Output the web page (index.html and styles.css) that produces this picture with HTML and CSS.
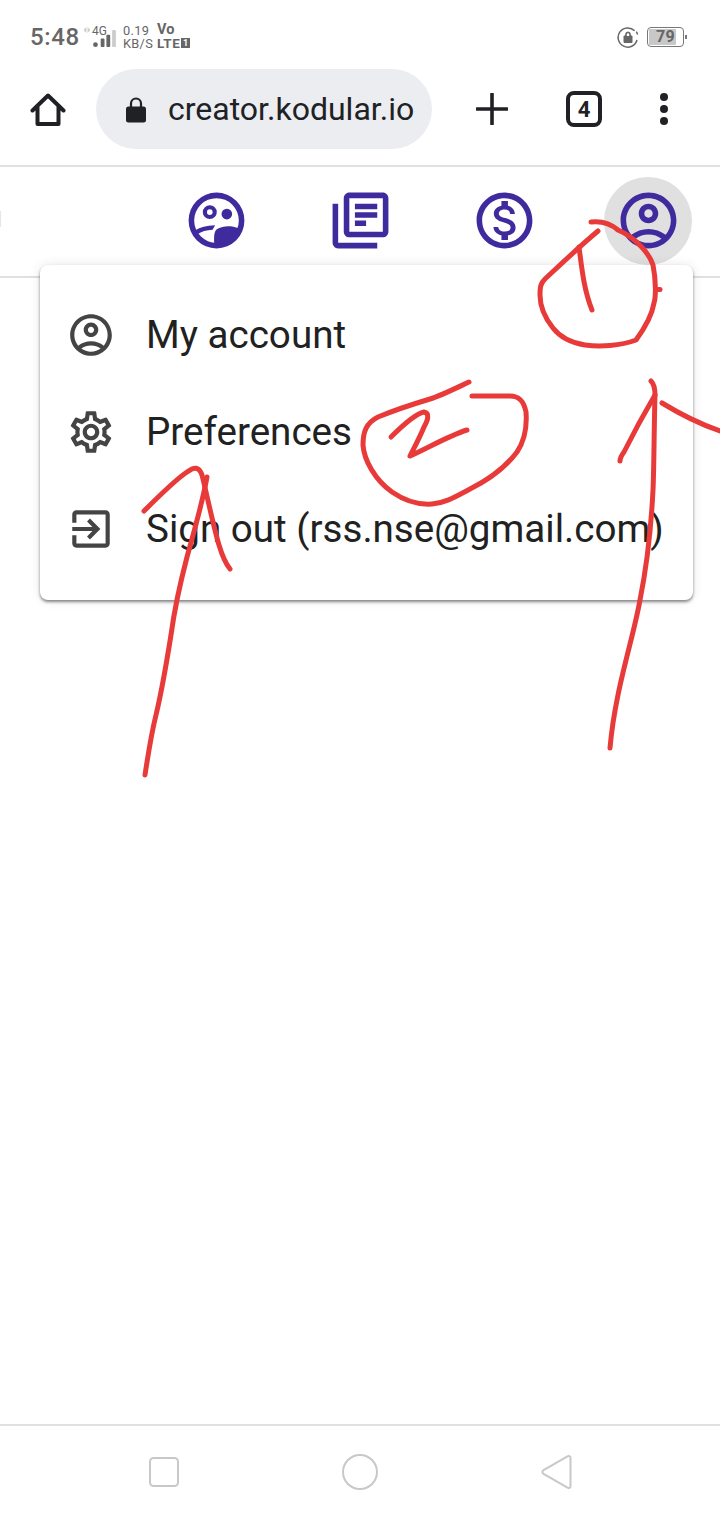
FILE: index.html
```html
<!DOCTYPE html>
<html lang="en">
<head>
<meta charset="utf-8">
<title>creator.kodular.io</title>
<link rel="stylesheet" href="styles.css">
</head>
<body>
<div class="phone">
  <header class="status">
    <div class="status-left">
      <span class="clock">5:48</span>
      <svg class="sig-arrows" viewBox="0 0 8 8"><path d="M3.4 1L.6 4l2.8 3zM4.6 1l2.8 3-2.8 3z"/></svg>
      <div class="signal">
        <span class="tag-4g">4G</span>
        <svg class="bars" viewBox="0 0 24 20"><circle cx="2.5" cy="16.5" r="2.5" fill="#666"/><rect x="8" y="10" width="4" height="9" rx="1" fill="#666"/><rect x="14" y="6" width="4" height="13" rx="1" fill="#666"/><rect x="20" y="1" width="4" height="18" rx="1" fill="#ccc"/></svg>
      </div>
      <div class="speed"><span>0.19</span><span>KB/S</span></div>
      <div class="volte"><span class="vo">Vo</span><span class="lte">LTE<i class="sim">1</i></span></div>
    </div>
    <div class="status-right">
      <svg class="rot" viewBox="0 0 22 22"><path d="M17.6 4.8A9.6 9.6 0 1 0 20 14" fill="none" stroke="#666" stroke-width="1.5"/><path d="M20.6 8.5a10 10 0 0 0-1.3-2.8" fill="none" stroke="#666" stroke-width="1.5"/><path d="M7 10h8v6.5H7zM8.6 10V8.4a2.4 2.4 0 0 1 4.8 0V10" fill="#666" stroke="#666" stroke-width="1"/><path d="M9.8 10V8.4a1.2 1.2 0 0 1 2.4 0V10z" fill="#fff"/></svg>
      <div class="battery"><span class="level"></span><span class="pct">79</span></div>
      <span class="nub"></span>
    </div>
  </header>

  <nav class="toolbar">
    <svg class="home" viewBox="0 0 36 36"><path d="M2.5 18.5L18 3.5l15.500 15M7.500 15v17h21V15" fill="none" stroke="#202124" stroke-width="4" stroke-linejoin="round" stroke-linecap="round"/></svg>
    <div class="omnibox">
      <svg class="lock" viewBox="0 0 20 26"><path d="M2.500 9.500h15a2.500 2.500 0 0 1 2.500 2.500v11a2.500 2.500 0 0 1-2.500 2.500h-15a2.500 2.500 0 0 1-2.500-2.500V12a2.500 2.500 0 0 1 2.500-2.500z" fill="#202124"/><path d="M5 11V6.500a5 5 0 0 1 10 0V11" fill="none" stroke="#202124" stroke-width="2.200"/></svg>
      <span class="url">creator.kodular.io</span>
    </div>
    <svg class="plus" viewBox="0 0 32 32"><path d="M16 1v30M1 16h30" stroke="#202124" stroke-width="3.600" stroke-linecap="round"/></svg>
    <div class="tabs">4</div>
    <div class="dots"><span></span><span></span><span></span></div>
  </nav>

  <section class="appbar">
    <span class="edge"></span>
    <svg class="app-icon" viewBox="0 0 24 24"><path fill-rule="evenodd" d="M12 2a10 10 0 1 0 0 20 10 10 0 0 0 0-20zm0 2a8 8 0 1 1 0 16 8 8 0 0 1 0-16z"/><path fill-rule="evenodd" d="M9.600 6.500a2.500 2.500 0 1 0 0 5 2.500 2.500 0 0 0 0-5zm0 1.500a1 1 0 1 1 0 2 1 1 0 0 1 0-2z"/><circle cx="15.700" cy="9.700" r="1.900"/><path d="M4.500 15.500C6 14.500 8.500 13.800 11.500 13.700L10.600 15.300C8.500 15.400 6.500 15.900 5.200 16.900z"/><path d="M11.200 20.500C11 17.200 11.200 15.500 12.600 14.900C14 14 17 13.600 20 14.800L19.500 16C18 19 15 20.700 11.200 20.500z"/></svg>
    <svg class="app-icon" viewBox="0 0 24 24"><path d="M4 6H2v14c0 1.100.9 2 2 2h14v-2H4V6zm16-4H8c-1.100 0-2 .9-2 2v12c0 1.100.9 2 2 2h12c1.100 0 2-.9 2-2V4c0-1.100-.9-2-2-2zm0 14H8V4h12v12zM10 9h8v2h-8zm0 3h4v2h-4zm0-6h8v2h-8z"/></svg>
    <svg class="app-icon" viewBox="0 0 24 24"><path d="M12 2C6.480 2 2 6.480 2 12s4.480 10 10 10 10-4.480 10-10S17.520 2 12 2zm0 18c-4.410 0-8-3.590-8-8s3.590-8 8-8 8 3.590 8 8-3.590 8-8 8zm.31-8.860c-1.770-.45-2.340-.94-2.340-1.670 0-.84.79-1.430 2.100-1.430 1.380 0 1.900.66 1.940 1.640h1.710c-.05-1.340-.87-2.570-2.490-2.970V5H10.900v1.690c-1.510.32-2.720 1.300-2.720 2.810 0 1.790 1.490 2.690 3.660 3.210 1.950.46 2.340 1.150 2.340 1.870 0 .53-.39 1.390-2.100 1.390-1.600 0-2.230-.72-2.320-1.640H8.040c.1 1.700 1.360 2.660 2.860 2.970V19h2.340v-1.670c1.520-.29 2.720-1.160 2.730-2.770-.01-2.200-1.900-2.960-3.660-3.420z"/></svg>
    <div class="account-btn">
      <svg class="app-icon" viewBox="0 0 24 24"><path d="M12 2C6.480 2 2 6.480 2 12s4.480 10 10 10 10-4.480 10-10S17.520 2 12 2zM7.350 18.500C8.660 17.560 10.260 17 12 17s3.340.56 4.650 1.500C15.340 19.440 13.740 20 12 20s-3.340-.56-4.650-1.500zm10.790-1.380C16.450 15.800 14.320 15 12 15s-4.450.8-6.140 2.120C4.700 15.730 4 13.950 4 12c0-4.420 3.580-8 8-8s8 3.580 8 8c0 1.950-.7 3.730-1.860 5.120zM12 6c-1.930 0-3.500 1.570-3.500 3.500S10.070 13 12 13s3.500-1.570 3.500-3.500S13.930 6 12 6zm0 5c-.83 0-1.500-.67-1.500-1.500S11.170 8 12 8s1.500.67 1.500 1.500S12.830 11 12 11z"/></svg>
    </div>
  </section>

  <main class="content"></main>

  <footer class="navbar">
    <svg class="nav-square" viewBox="0 0 30 30"><rect x="1" y="1" width="28" height="28" rx="3.500"/></svg>
    <svg class="nav-circle" viewBox="0 0 36 36"><circle cx="18" cy="18" r="17"/></svg>
    <svg class="nav-back" viewBox="0 0 32 36"><path d="M2.500 16.200L26.500 2.300c1.500-.8 3-.1 3 1.700v28c0 1.800-1.500 2.500-3 1.700L2.500 19.800c-1.500-.9-1.500-2.700 0-3.600z"/></svg>
  </footer>

  <div class="menu">
    <div class="menu-item">
      <svg class="menu-icon" viewBox="0 0 24 24"><path d="M12 2C6.480 2 2 6.480 2 12s4.480 10 10 10 10-4.480 10-10S17.520 2 12 2zM7.350 18.500C8.660 17.560 10.260 17 12 17s3.340.56 4.650 1.500C15.340 19.440 13.740 20 12 20s-3.340-.56-4.650-1.500zm10.790-1.380C16.450 15.800 14.320 15 12 15s-4.450.8-6.140 2.120C4.700 15.730 4 13.950 4 12c0-4.420 3.580-8 8-8s8 3.580 8 8c0 1.950-.7 3.730-1.860 5.120zM12 6c-1.930 0-3.500 1.570-3.500 3.500S10.070 13 12 13s3.500-1.570 3.500-3.500S13.930 6 12 6zm0 5c-.83 0-1.500-.67-1.500-1.500S11.170 8 12 8s1.500.67 1.500 1.500S12.830 11 12 11z"/></svg>
      <span>My account</span>
    </div>
    <div class="menu-item">
      <svg class="menu-icon" viewBox="0 0 24 24"><path d="M19.430 12.980c.04-.32.07-.64.07-.98 0-.34-.03-.66-.07-.98l2.110-1.650c.19-.15.24-.42.12-.64l-2-3.460c-.09-.16-.26-.25-.44-.25-.06 0-.12.01-.17.03l-2.490 1c-.52-.4-1.080-.73-1.690-.98l-.38-2.650C14.460 2.180 14.250 2 14 2h-4c-.25 0-.46.18-.49.42l-.38 2.650c-.61.25-1.170.59-1.690.98l-2.490-1c-.06-.02-.12-.03-.18-.03-.17 0-.34.09-.43.25l-2 3.460c-.13.22-.07.49.12.64l2.110 1.650c-.04.32-.07.65-.07.98 0 .33.03.66.07.98l-2.110 1.650c-.19.15-.24.42-.12.64l2 3.460c.09.16.26.25.44.25.06 0 .12-.01.17-.03l2.490-1c.52.4 1.080.73 1.690.98l.38 2.650c.03.24.24.42.49.42h4c.25 0 .46-.18.49-.42l.38-2.650c.61-.25 1.170-.59 1.690-.98l2.490 1c.06.02.12.03.18.03.17 0 .34-.09.43-.25l2-3.460c.12-.22.07-.49-.12-.64l-2.110-1.650zm-1.980-1.710c.04.31.05.52.05.73 0 .21-.02.43-.05.73l-.14 1.130.89.7 1.080.84-.7 1.210-1.270-.51-1.040-.42-.9.68c-.43.32-.84.56-1.250.73l-1.060.43-.16 1.130-.2 1.350h-1.400l-.19-1.350-.16-1.130-1.060-.43c-.43-.18-.83-.41-1.230-.71l-.91-.7-1.060.43-1.270.51-.7-1.210 1.080-.84.89-.7-.14-1.130c-.03-.31-.05-.54-.05-.74s.02-.43.05-.73l.14-1.130-.89-.7-1.080-.84.7-1.210 1.270.51 1.040.42.9-.68c.43-.32.84-.56 1.250-.73l1.060-.43.16-1.130.2-1.350h1.390l.19 1.350.16 1.130 1.060.43c.43.18.83.41 1.230.71l.91.7 1.060-.43 1.270-.51.7 1.210-1.070.85-.89.7.14 1.130zM12 8c-2.210 0-4 1.790-4 4s1.790 4 4 4 4-1.790 4-4-1.790-4-4-4zm0 6c-1.100 0-2-.9-2-2s.9-2 2-2 2 .9 2 2-.9 2-2 2z"/></svg>
      <span>Preferences</span>
    </div>
    <div class="menu-item">
      <svg class="menu-icon" viewBox="0 0 24 24"><path d="M10.090 15.590L11.500 17l5-5-5-5-1.410 1.410L12.670 11H3v2h9.670l-2.580 2.590zM19 3H5c-1.110 0-2 .9-2 2v4h2V5h14v14H5v-4H3v4c0 1.100.89 2 2 2h14c1.100 0 2-.9 2-2V5c0-1.100-.9-2-2-2z"/></svg>
      <span>Sign out (rss.nse@gmail.com)</span>
    </div>
  </div>

  <svg class="scribble" viewBox="0 0 720 1520">
    <path d="M591 222C600 221 610 223 618 230C632 236 648 250 653 265C656 280 656 297 654 303C652 315 647 325 636 340C620 346 600 347 585 345C572 343 560 337 553 328C545 318 540 307 540 295C540 286 541 283 545 279C560 265 580 246 598 231"/>
    <path d="M579 247C582 270 584 290 592 310"/>
    <path d="M658 289.500L660 289.500"/>
    <path d="M469 382C450 391 440 396 430 399C410 405 395 410 378 417C366 423 363 432 363 445C364 460 375 480 392 492C405 501 418 505 432 504C445 503 455 497 470 489C490 479 505 468 517 452C525 440 527 425 526 412C524 402 520 396 510 396L472 396"/>
    <path d="M391 437C400 428 415 414 424 412C430 413 428 420 424 427C420 437 414 448 410 456C428 448 448 436 467 430"/>
    <path d="M651 381C654 384 655 388 655 395C654 430 654 470 653 490C651 530 648 560 640 600C633 640 615 690 610 748"/>
    <path d="M655 395C645 412 632 436 624 452C621 456 620 458 620 461"/>
    <path d="M662 403C680 414 700 424 720 431"/>
    <path d="M145 775C148 755 151 735 156 715C162 690 167 660 171 635C175 605 181 580 187 557C193 535 202 505 207 477"/>
    <path d="M144 511C160 495 175 480 187 472C195 466 199 467 202 475C207 495 213 525 219 545C222 555 226 564 230 569"/>
  </svg>
</div>
</body>
</html>
```

FILE: styles.css
```css
* { box-sizing: border-box; }
html, body { margin: 0; padding: 0; background: #fff; }
body { font-family: Roboto, "Noto Sans", sans-serif; }

.phone {
  position: relative;
  width: 720px;
  height: 1520px;
  overflow: hidden;
  display: flex;
  flex-direction: column;
  background: #fff;
}

/* status bar */
.status {
  height: 61px;
  flex: none;
  display: flex;
  align-items: center;
  justify-content: space-between;
  padding: 13px 33px 0 30px;
  color: #666;
}
.status-left, .status-right { display: flex; align-items: center; }
.clock { font-size: 24px; font-weight: 500; letter-spacing: .6px; width: 53px; }
.sig-arrows { width: 8px; height: 8px; fill: #ccc; margin: -14px 0 0 0; }
.signal { position: relative; width: 26px; height: 24px; }
.tag-4g { position: absolute; left: 1px; top: -1px; font-size: 12px; line-height: 14px; }
.bars { position: absolute; left: 2px; top: 4px; width: 23px; height: 19px; }
.speed { display: flex; flex-direction: column; font-size: 12.800px; line-height: 13px; margin-left: 6px; letter-spacing: .3px; width: 34px; }
.volte { display: flex; flex-direction: column; font-weight: 700; margin-top: -2px; }
.vo { font-size: 14.500px; line-height: 13px; letter-spacing: .2px; }
.lte { display: flex; align-items: center; font-size: 13.500px; line-height: 12px; letter-spacing: .5px; margin-top: 1px; }
.sim { display: inline-flex; align-items: center; justify-content: center; width: 9px; height: 10px; margin-left: 1px; background: #666; color: #fff; font-size: 9px; font-style: normal; }
.rot { width: 22px; height: 22px; margin-right: 8px; }
.battery { position: relative; width: 37px; height: 20px; border: 1px solid #777; border-radius: 4px; padding: 1px; margin-top: -1px; }
.level { display: block; width: 27px; height: 16px; background: #c8c8c8; border-radius: 1px; }
.pct { position: absolute; left: 8px; top: 0; font-size: 16px; line-height: 18px; font-weight: 700; letter-spacing: .3px; }
.nub { width: 2px; height: 4px; background: #777; margin-left: 1px; margin-top: -1px; }

/* browser toolbar */
.toolbar {
  height: 106px;
  flex: none;
  display: flex;
  align-items: center;
  border-bottom: 2px solid #e0e0e0;
  padding: 0 0 8px 30px;
}
.home { width: 36px; height: 36px; flex: none; margin-top: 2px; }
.omnibox {
  width: 336px;
  height: 80px;
  margin-left: 30px;
  flex: none;
  display: flex;
  align-items: center;
  background: #ebedf1;
  border-radius: 40px;
  padding-left: 30px;
}
.lock { width: 20px; height: 26px; flex: none; margin-top: 1px; }
.url { font-size: 32px; color: #202124; margin-left: 22px; white-space: nowrap; }
.plus { width: 32px; height: 32px; flex: none; margin-left: 44px; }
.tabs {
  width: 36px;
  height: 36px;
  flex: none;
  margin-left: 58px;
  border: 4px solid #202124;
  border-radius: 8px;
  display: flex;
  align-items: center;
  justify-content: center;
  font-size: 22px;
  font-weight: 700;
  color: #202124;
}
.dots { display: flex; flex-direction: column; gap: 4px; margin-left: 58px; }
.dots span { width: 8px; height: 8px; border-radius: 50%; background: #202124; }

/* app bar */
.appbar {
  position: relative;
  height: 111px;
  flex: none;
  display: flex;
  align-items: center;
  border-bottom: 2px solid #e0e0e0;
  padding: 0 27px 2px 183px;
}
.edge { position: absolute; left: 0; top: 44px; width: 1px; height: 16px; background: #e6e6e6; }
.app-icon { width: 67px; height: 67px; flex: none; fill: #3f2a9e; }
.appbar > .app-icon { margin-right: 77px; }
.account-btn {
  width: 88px;
  height: 88px;
  margin-left: -11px;
  flex: none;
  border-radius: 50%;
  background: #e0e0e0;
  display: flex;
  align-items: center;
  justify-content: center;
}

.content { flex: 1; }

/* android nav bar */
.navbar {
  height: 96px;
  flex: none;
  border-top: 2px solid #e0e0e0;
  display: flex;
  align-items: center;
  padding: 0 0 2px 149px;
  fill: none;
  stroke: #c8c8c8;
  stroke-width: 2;
}
.nav-square { width: 30px; height: 30px; flex: none; }
.nav-circle { width: 36px; height: 36px; flex: none; margin-left: 163px; }
.nav-back { width: 32px; height: 36px; flex: none; margin-left: 163px; }

/* dropdown */
.menu {
  position: absolute;
  left: 40px;
  top: 265px;
  width: 653px;
  height: 335px;
  background: #fff;
  border-radius: 8px;
  padding-top: 21px;
  box-shadow: 0 2px 3px rgba(0,0,0,.45), 0 0 12px rgba(0,0,0,.1);
}
.menu-item {
  height: 97px;
  display: flex;
  align-items: center;
  font-size: 38.600px;
  color: #212121;
  white-space: nowrap;
  padding-left: 26px;
}
.menu-icon { width: 50px; height: 50px; flex: none; fill: #444; margin-right: 30px; }

/* hand-drawn annotation */
.scribble {
  position: absolute;
  left: 0;
  top: 0;
  width: 720px;
  height: 1520px;
  fill: none;
  stroke: #e93a3a;
  stroke-width: 5;
  stroke-linecap: round;
  stroke-linejoin: round;
  pointer-events: none;
}
```
